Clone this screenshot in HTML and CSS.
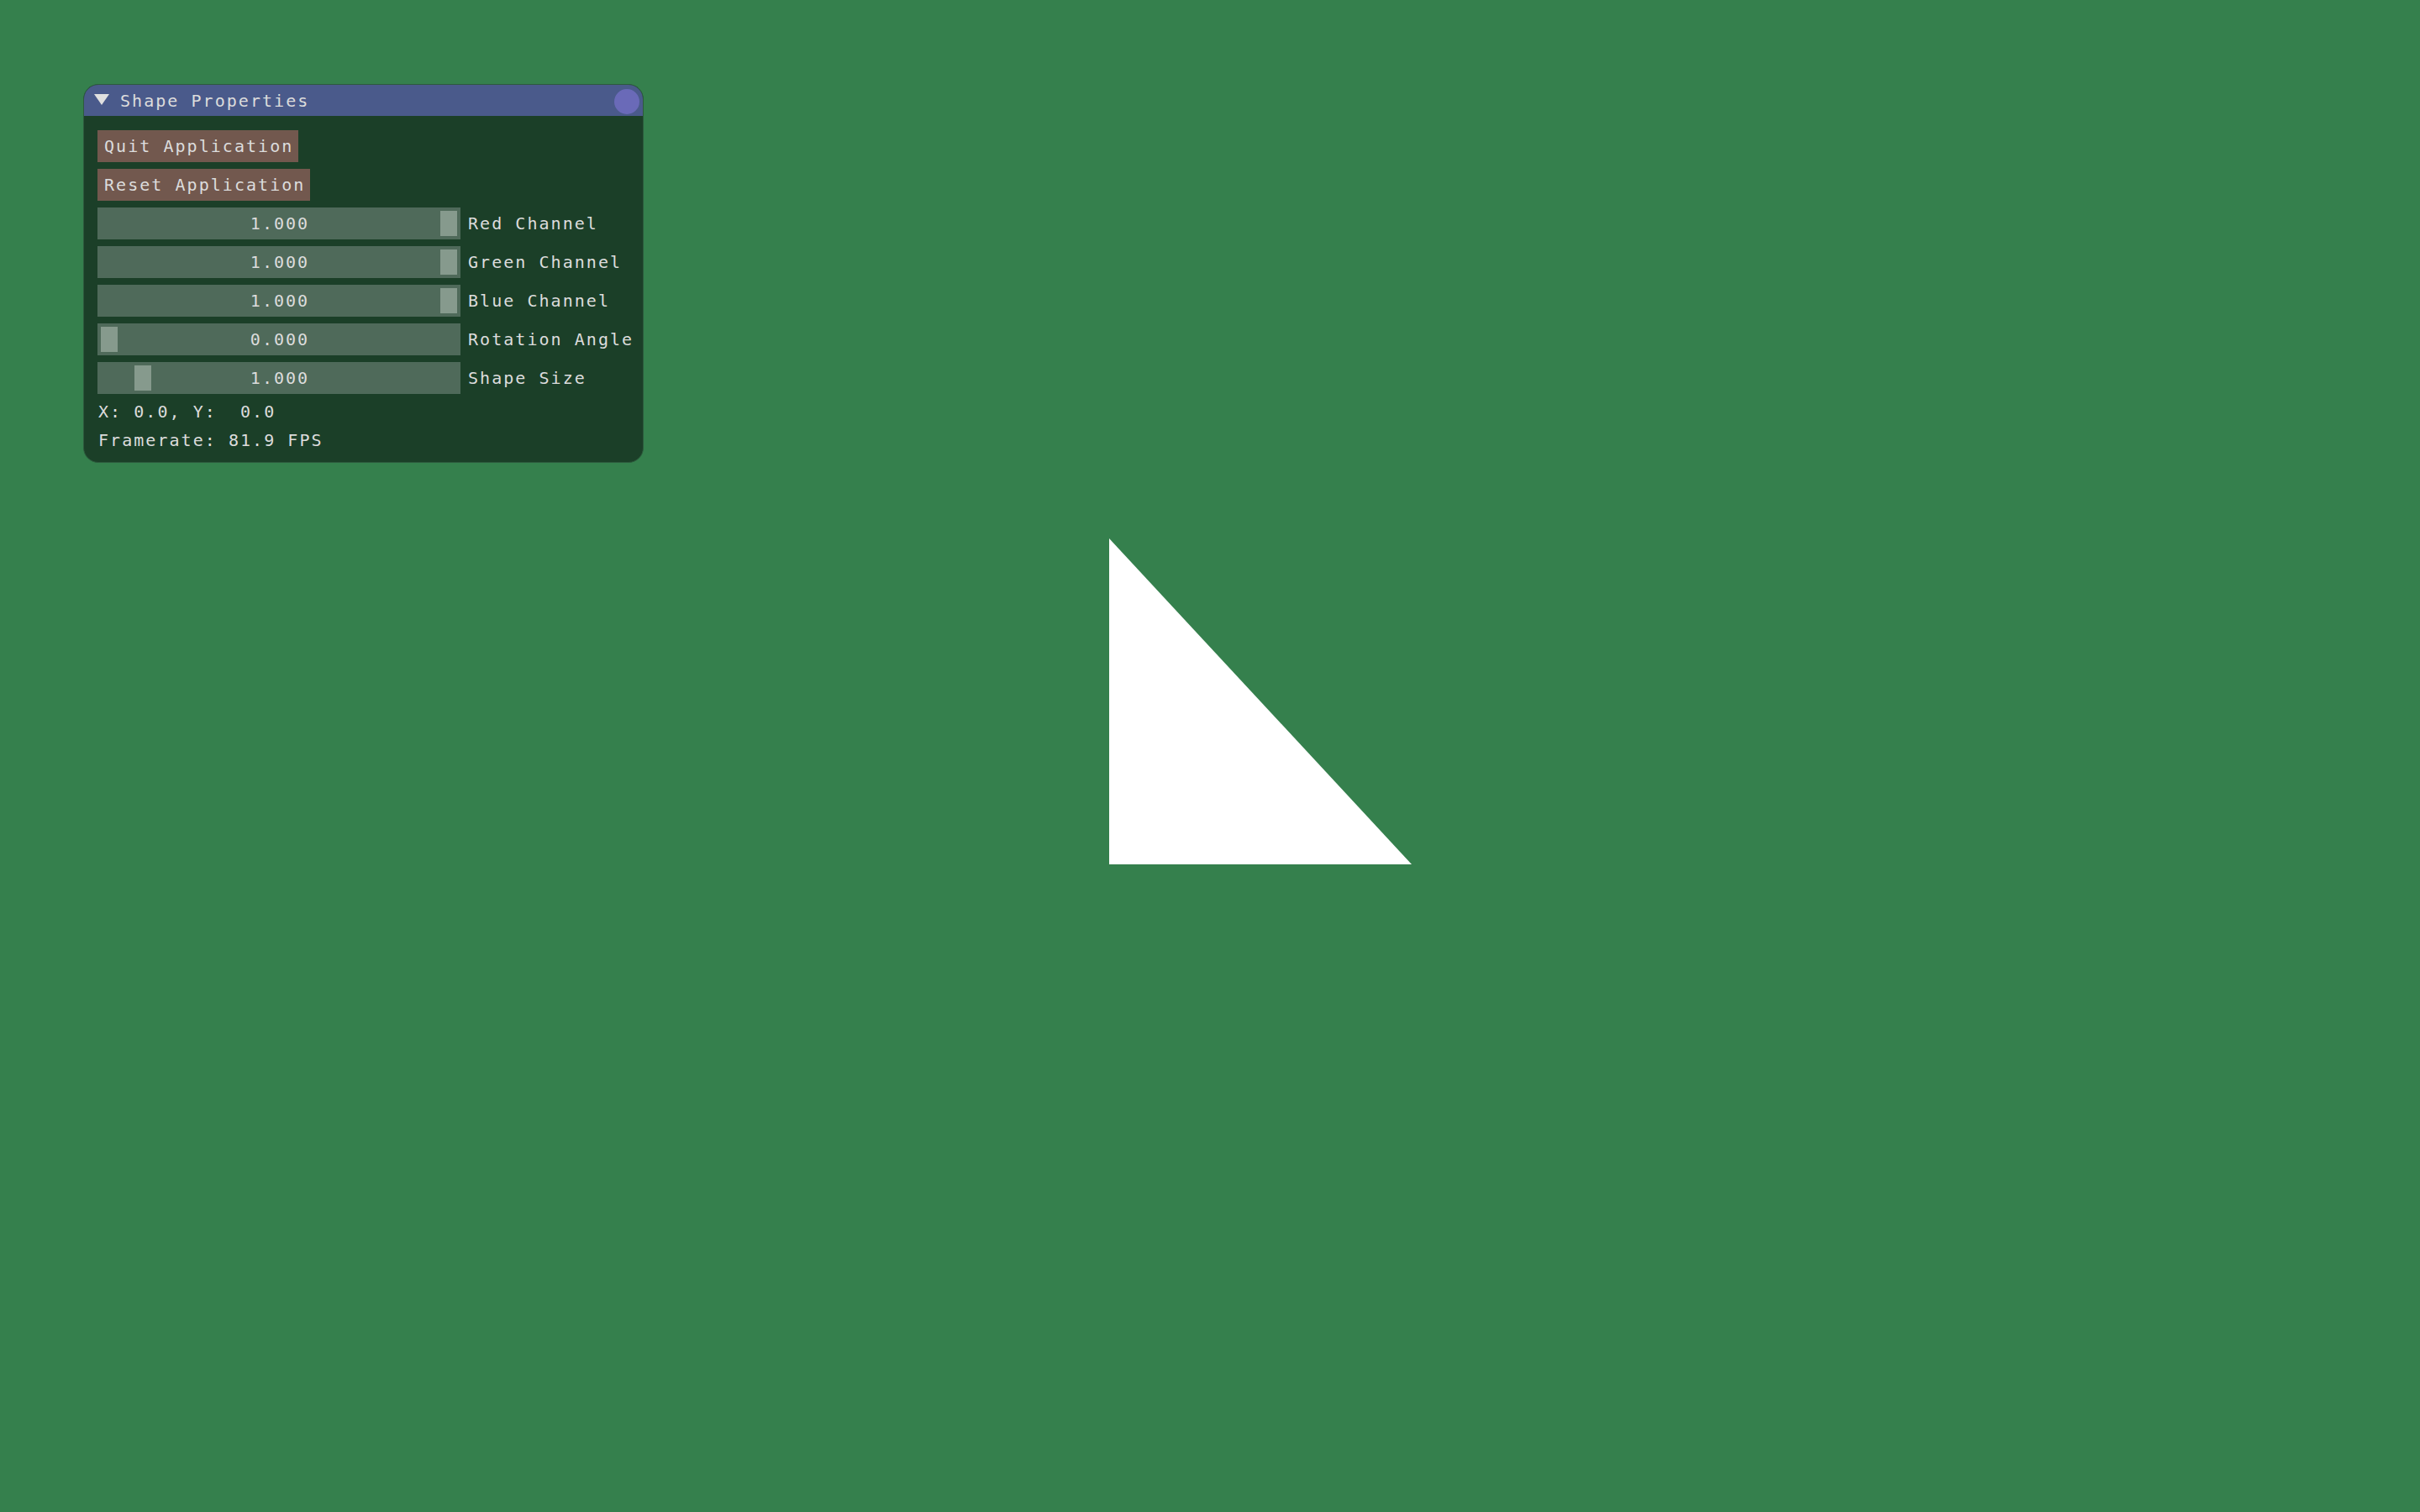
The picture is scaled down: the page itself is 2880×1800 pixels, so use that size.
FILE: index.html
```html
<!DOCTYPE html>
<html>
<head>
<meta charset="utf-8">
<title>Shape Properties</title>
<link rel="stylesheet" href="styles.css">
</head>
<body>
<div class="scene">
  <svg class="shape" width="2880" height="1800" viewBox="0 0 2880 1800">
    <polygon points="1320,641 1320,1029 1680,1029" fill="#ffffff"/>
  </svg>
  <div class="window">
    <div class="titlebar">
      <svg class="arrow" width="18" height="14" viewBox="0 0 18 14"><polygon points="0,0 18,0 9,13" fill="#e0e0e0"/></svg>
      <span class="title">Shape Properties</span>
      <span class="close"></span>
    </div>
    <div class="content">
      <div class="button">Quit Application</div>
      <div class="button">Reset Application</div>
      <div class="row"><div class="slider"><span class="grab" style="left:408px"></span><span class="value">1.000</span></div><span class="label">Red Channel</span></div>
      <div class="row"><div class="slider"><span class="grab" style="left:408px"></span><span class="value">1.000</span></div><span class="label">Green Channel</span></div>
      <div class="row"><div class="slider"><span class="grab" style="left:408px"></span><span class="value">1.000</span></div><span class="label">Blue Channel</span></div>
      <div class="row"><div class="slider"><span class="grab" style="left:4px"></span><span class="value">0.000</span></div><span class="label">Rotation Angle</span></div>
      <div class="row"><div class="slider"><span class="grab" style="left:44px"></span><span class="value">1.000</span></div><span class="label">Shape Size</span></div>
      <div class="text first">X: 0.0, Y:  0.0</div>
      <div class="text">Framerate: 81.9 FPS</div>
    </div>
  </div>
</div>
</body>
</html>
```
FILE: styles.css
```css
html, body {
  margin: 0;
  padding: 0;
}
body {
  background: #35804d;
  width: 2880px;
  height: 1800px;
  overflow: hidden;
  font-family: "DejaVu Sans Mono", "Liberation Mono", monospace;
  font-size: 20px;
  letter-spacing: 2.04px;
  color: #dcdcdc;
}
.scene {
  position: relative;
  width: 2880px;
  height: 1800px;
}
.shape {
  position: absolute;
  left: 0;
  top: 0;
}
.window {
  position: absolute;
  left: 99px;
  top: 100px;
  width: 667px;
  height: 451px;
  box-sizing: border-box;
  background: #1b3f28;
  border: 1px solid #2d5a3d;
  border-radius: 18px;
  overflow: hidden;
  display: flex;
  flex-direction: column;
}
.titlebar {
  height: 37px;
  flex: 0 0 37px;
  background: #4a5a8b;
  display: flex;
  align-items: center;
  padding-left: 12px;
  padding-right: 4px;
  white-space: pre;
}
.arrow {
  display: block;
  margin-right: 13px;
  margin-top: -2px;
}
.title {
  flex: 1;
  line-height: 37px;
  padding-top: 2px;
}
.close {
  width: 30px;
  height: 30px;
  border-radius: 50%;
  background: #6a6ab8;
  margin-top: 2px;
}
.content {
  padding: 17px 0 0 16px;
  display: flex;
  flex-direction: column;
  gap: 8px;
  white-space: pre;
}
.button {
  align-self: flex-start;
  background: #72584e;
  height: 38px;
  line-height: 38px;
  padding: 0 6px 0 8px;
}
.row {
  display: flex;
  align-items: center;
  height: 38px;
}
.slider {
  position: relative;
  width: 432px;
  height: 38px;
  background: #4f6a5a;
  display: flex;
  align-items: center;
  justify-content: center;
}
.grab {
  position: absolute;
  top: 4px;
  width: 20px;
  height: 30px;
  background: #869a8d;
}
.value {
  position: relative;
  line-height: 38px;
  padding-left: 2px;
}
.label {
  margin-left: 9px;
  line-height: 38px;
}
.text {
  line-height: 26px;
  height: 26px;
  padding-left: 1px;
}
.text.first {
  margin-top: 0;
}
```
